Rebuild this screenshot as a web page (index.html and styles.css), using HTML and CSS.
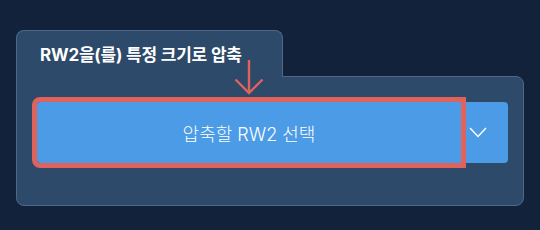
FILE: index.html
```html
<!DOCTYPE html>
<html lang="ko">
<head>
  <meta charset="UTF-8" />
  <title>RW2 압축</title>
  <link rel="stylesheet" href="styles.css">
</head>
<body>
  <div class="card">
    <div class="tab">RW2을(를) 특정 크기로 압축</div>
    <div class="panel">
      <div class="split">
        <button class="main">압축할 RW2 선택</button>
        <button class="drop">
          <svg width="18" height="11" viewBox="0 0 18 11">
            <path d="M1 1 L9 9.5 L17 1" fill="none" stroke="#fff" stroke-width="1.5" />
          </svg>
        </button>
      </div>
      <svg class="pointer" width="30" height="36" viewBox="0 0 30 36">
        <path d="M15 0 V33 M1.5 19.5 L15 33 L28.5 19.5" fill="none" stroke="#e0625c" stroke-width="2.4" />
      </svg>
    </div>
  </div>
</body>
</html>
```

FILE: styles.css
```css
* {
  box-sizing: border-box;
}

body {
  margin: 0;
  padding: 30px 16px 0 16px;
  background: #11223a;
  font-family: Inter, "Noto Sans CJK KR", sans-serif;
  color: #fff;
}

.card {
  width: 508px;
}

.tab {
  position: relative;
  z-index: 1;
  width: 267px;
  height: 47px;
  margin-bottom: -1px;
  padding: 11px 0 0 23px;
  background: #2d4a6a;
  border: 1px solid #4f6888;
  border-bottom: none;
  border-radius: 8px 8px 0 0;
  font-size: 17px;
  font-weight: 700;
  line-height: 26px;
  letter-spacing: -0.2px;
}

.panel {
  position: relative;
  height: 130px;
  padding: 25px 15px 0 20px;
  background: #2d4a6a;
  border: 1px solid #4f6888;
  border-radius: 0 8px 8px 8px;
}

.split {
  display: flex;
  height: 61px;
}

button {
  border: none;
  background: #4b9be6;
  color: #fff;
  font-family: inherit;
  cursor: pointer;
}

.main {
  flex: 1;
  padding: 0;
  font-size: 18px;
  font-weight: 300;
  border-radius: 3px 0 0 3px;
  outline: 5px solid #e0625c;
  position: relative;
  z-index: 1;
}

.drop {
  width: 47px;
  padding: 0 14px 0 0;
  border-radius: 0 4px 4px 0;
  display: flex;
  align-items: center;
  justify-content: center;
}

.pointer {
  position: absolute;
  left: 217px;
  top: -17px;
  z-index: 2;
}
```
